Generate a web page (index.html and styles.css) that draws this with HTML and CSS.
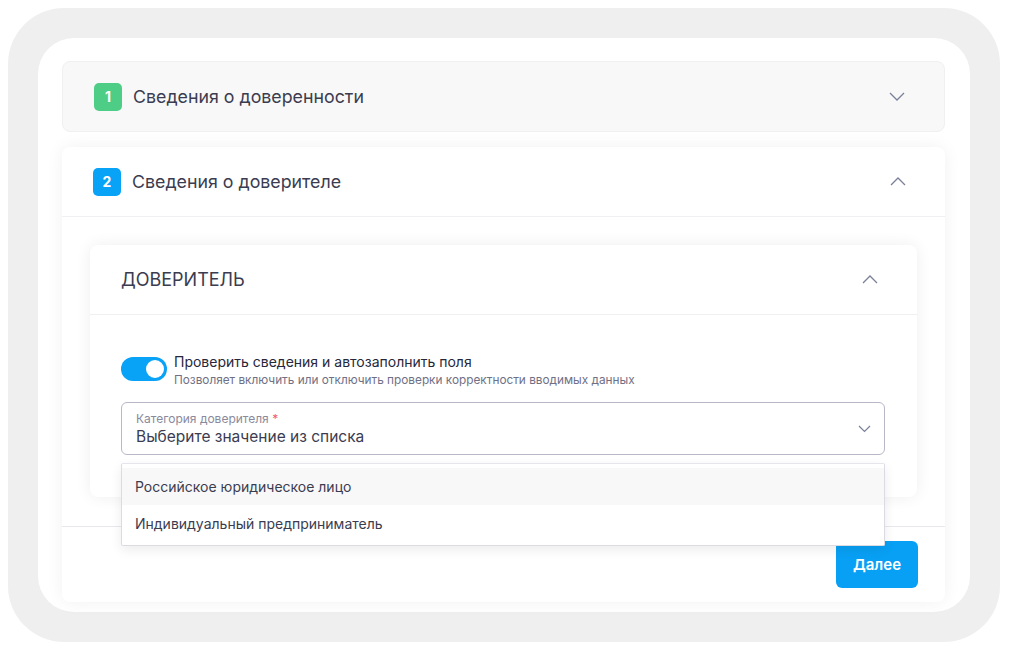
FILE: index.html
```html
<!DOCTYPE html>
<html lang="ru">
<head>
<meta charset="utf-8">
<link rel="stylesheet" href="styles.css">
</head>
<body>
<div class="frame">
  <div class="inner">
    <div class="card card-collapsed">
      <div class="card-head">
        <span class="badge badge-green">1</span>
        <span class="card-title">Сведения о доверенности</span>
        <svg class="chev" width="16" height="9" viewBox="0 0 16 9"><path d="M1 1l7 7 7-7" fill="none" stroke="#7b8099" stroke-width="1.3"/></svg>
      </div>
    </div>
    <div class="card card-open">
      <div class="card-head card-head-line">
        <span class="badge badge-blue">2</span>
        <span class="card-title">Сведения о доверителе</span>
        <svg class="chev" width="16" height="9" viewBox="0 0 16 9"><path d="M1 8l7-7 7 7" fill="none" stroke="#7b8099" stroke-width="1.3"/></svg>
      </div>
      <div class="card-body">
        <div class="sub">
          <div class="sub-head">
            <span class="sub-title">ДОВЕРИТЕЛЬ</span>
            <svg class="chev" width="16" height="9" viewBox="0 0 16 9"><path d="M1 8l7-7 7 7" fill="none" stroke="#7b8099" stroke-width="1.3"/></svg>
          </div>
          <div class="sub-body">
            <div class="toggle-row">
              <span class="toggle"><span class="knob"></span></span>
              <div class="toggle-text">
                <div class="toggle-title">Проверить сведения и автозаполнить поля</div>
                <div class="toggle-hint">Позволяет включить или отключить проверки корректности вводимых данных</div>
              </div>
            </div>
            <div class="select-wrap">
              <div class="select">
                <div class="select-text">
                  <div class="select-label">Категория доверителя <span class="req">*</span></div>
                  <div class="select-value">Выберите значение из списка</div>
                </div>
                <svg class="sel-chev" width="13" height="8" viewBox="0 0 13 8"><path d="M1 1l5.5 5.5L12 1" fill="none" stroke="#7b8099" stroke-width="1.2"/></svg>
              </div>
              <div class="menu">
                <div class="menu-item menu-item-hover">Российское юридическое лицо</div>
                <div class="menu-item">Индивидуальный предприниматель</div>
              </div>
            </div>
          </div>
        </div>
      </div>
      <div class="card-foot">
        <button class="btn">Далее</button>
      </div>
    </div>
  </div>
</div>
</body>
</html>
```
FILE: styles.css
```css
* { box-sizing: border-box; }
body {
  margin: 8px;
  background: #fff;
  font-family: Inter, "Noto Sans", sans-serif;
  color: #3b3c50;
}
.frame {
  width: 992px;
  height: 634px;
  background: #efefef;
  border-radius: 56px;
  padding: 30px;
}
.inner {
  background: #fff;
  border-radius: 36px;
  height: 574px;
  padding: 23px 25px 0 24px;
  display: flex;
  flex-direction: column;
  gap: 15px;
}
.card {
  border-radius: 8px;
}
.card-collapsed {
  background: #f8f8f8;
  border: 1px solid #f0f0f0;
  height: 71px;
}
.card-open {
  background: #fff;
  box-shadow: 0 0 18px rgba(0,0,0,0.06);
  height: 455px;
  display: flex;
  flex-direction: column;
}
.card-head {
  height: 69px;
  display: flex;
  align-items: center;
  padding: 0 39px 0 31px;
}
.card-head-line {
  border-bottom: 1px solid #f0f0f2;
  height: 70px;
}
.badge {
  width: 28px;
  height: 28px;
  border-radius: 5px;
  color: #fff;
  font-weight: 700;
  font-size: 14px;
  display: flex;
  align-items: center;
  justify-content: center;
  margin-right: 11px;
}
.badge-green { background: #4ecd86; }
.badge-blue { background: #08a2f6; }
.card-title {
  font-size: 17.8px;
  flex: 1;
  color: #3b3c50;
}
.chev { display: block; }
.card-body {
  padding: 28px 28px 0 28px;
  height: 310px;
  border-bottom: 1px solid #e8e7ee;
}
.sub {
  background: #fff;
  border-radius: 8px;
  box-shadow: 0 0 16px rgba(0,0,0,0.07);
  height: 252px;
}
.sub-head {
  height: 70px;
  border-bottom: 1px solid #f0f0f2;
  display: flex;
  align-items: center;
  justify-content: space-between;
  padding: 0 39px 0 31px;
}
.sub-title {
  font-size: 18px;
  color: #3b3c50;
}
.sub-body {
  padding: 42px 32px 0 31px;
}
.toggle-row {
  display: flex;
  align-items: flex-start;
}
.toggle {
  width: 46px;
  height: 24px;
  border-radius: 12px;
  background: #08a2f6;
  display: flex;
  align-items: center;
  justify-content: flex-end;
  padding-right: 3px;
  margin-right: 7px;
  flex: none;
}
.knob {
  width: 18px;
  height: 18px;
  border-radius: 50%;
  background: #fff;
}
.toggle-title {
  font-size: 14px;
  line-height: 16px;
  margin-top: -3px;
  color: #26273a;
}
.toggle-hint {
  font-size: 11.8px;
  line-height: 14px;
  margin-top: 3px;
  color: #6f7086;
}
.select-wrap {
  position: relative;
  margin-top: 15px;
}
.select {
  height: 53px;
  border: 1px solid #b9b6c7;
  border-radius: 6px;
  display: flex;
  align-items: center;
  padding: 0 13px 0 14px;
}
.select-text { flex: 1; }
.select-label {
  font-size: 12px;
  line-height: 14px;
  color: #8a8a9c;
}
.req { color: #f0577a; }
.select-value {
  font-size: 15.5px;
  line-height: 19px;
  margin-top: 1px;
  color: #3b3c50;
}
.menu {
  position: absolute;
  left: 0;
  right: 0;
  top: 61px;
  height: 83px;
  background: #fff;
  border: 1px solid #dcdae3;
  border-top-color: #e6e5ec;
  border-radius: 2px;
  box-shadow: 0 4px 12px rgba(0,0,0,0.08);
  padding-top: 4px;
  z-index: 5;
}
.menu-item {
  height: 37px;
  display: flex;
  align-items: center;
  padding-left: 13px;
  font-size: 14px;
  color: #3b3c50;
}
.menu-item-hover { background: #f8f8f8; }
.card-foot {
  flex: 1;
  display: flex;
  justify-content: flex-end;
  align-items: flex-start;
  padding: 14px 27px 0 0;
}
.btn {
  width: 82px;
  height: 47px;
  border: none;
  border-radius: 6px;
  background: #08a0f4;
  color: #fff;
  font-family: Inter, "Noto Sans", sans-serif;
  font-size: 15px;
  font-weight: 600;
}
```
